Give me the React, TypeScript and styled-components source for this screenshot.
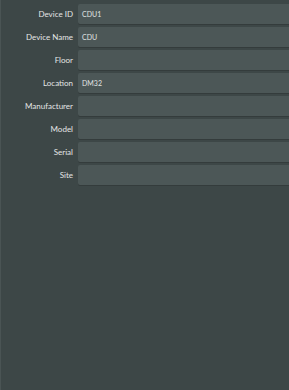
import * as React from 'react'
import styled, { createGlobalStyle } from 'styled-components'

const GlobalStyle = createGlobalStyle`
  html, body {
    margin: 0;
    padding: 0;
    background: #3d4747;
  }
  #root {
    min-height: 390px;
  }
`

interface Field {
  label: string
  value: string
}

const fields: Field[] = [
  { label: 'Device ID', value: 'CDU1' },
  { label: 'Device Name', value: 'CDU' },
  { label: 'Floor', value: '' },
  { label: 'Location', value: 'DM32' },
  { label: 'Manufacturer', value: '' },
  { label: 'Model', value: '' },
  { label: 'Serial', value: '' },
  { label: 'Site', value: '' },
]

const App: React.FC = () => (
  <>
    <GlobalStyle />
    <Panel>
      <Form>
        {fields.map((f) => (
          <Row key={f.label}>
            <Label>{f.label}</Label>
            <Input>{f.value}</Input>
          </Row>
        ))}
      </Form>
    </Panel>
  </>
)

const Panel = styled.div`
  width: 289px;
  height: 390px;
  overflow: hidden;
  background: #3d4747;
  border-left: 1px solid #4a5454;
  box-sizing: border-box;
  font-family: Lato, 'Open Sans', sans-serif;
`

const Form = styled.div`
  display: flex;
  flex-direction: column;
  gap: 3px;
  padding-top: 4px;
`

const Row = styled.div`
  display: grid;
  grid-template-columns: 72px 1fr;
  column-gap: 5px;
  align-items: center;
  height: 20px;
`

const Label = styled.div`
  color: #e4e6e6;
  font-size: 8px;
  text-align: right;
  white-space: nowrap;
`

const Input = styled.div`
  height: 20px;
  box-sizing: border-box;
  margin-right: -4px;
  padding: 0 4px;
  display: flex;
  align-items: center;
  background: #4c5757;
  border-radius: 2px;
  box-shadow: 0 1px 0 #343c3c;
  color: #e0e4e4;
  font-size: 7px;
`

export default App
